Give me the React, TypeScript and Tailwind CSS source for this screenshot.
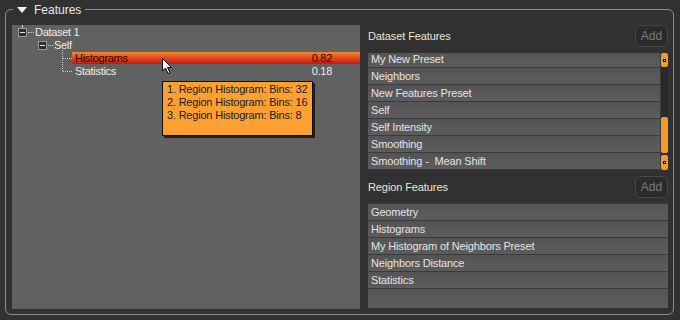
import React from "react";

const font = { fontFamily: '"Liberation Sans", Arial, sans-serif' };

const datasetItems = [
  "My New Preset",
  "Neighbors",
  "New Features Preset",
  "Self",
  "Self Intensity",
  "Smoothing",
  "Smoothing -  Mean Shift",
];

const regionItems = [
  "Geometry",
  "Histograms",
  "My Histogram of Neighbors Preset",
  "Neighbors Distance",
  "Statistics",
];

function Box() {
  return (
    <span className="flex h-[9px] w-[9px] items-center justify-center border border-[#9a9a9a] bg-[#2e2e2e]">
      <span className="h-[1px] w-[5px] bg-[#e0e0e0]" />
    </span>
  );
}

function AddButton() {
  return (
    <button className="h-[22px] w-[33px] rounded-[5px] border border-[#474747] bg-[#2b2b2b] text-[12px] text-[#7a7a7a]">
      Add
    </button>
  );
}

function Row({ label }: { label: string }) {
  return (
    <div className="mb-[1px] flex h-[16px] items-center whitespace-pre bg-gradient-to-b from-[#545454] to-[#5c5c5c] pl-[3px] text-[11px] tracking-[-0.15px] text-[#e4e4e4]">
      {label}
    </div>
  );
}

export default function App() {
  return (
    <div className="h-[320px] w-[680px] bg-[#313131] pl-[5px] pt-[9px]" style={font}>
      {/* Features group */}
      <div className="relative h-[306px] w-[669px] rounded-[6px] border border-[#8c8c8c] pb-[5px] pl-[6px] pr-[4px] pt-[15px]">
        <div className="absolute left-[7px] top-[-9px] flex items-center gap-[7px] bg-[#313131] px-[4px]">
          <svg width="10" height="7" viewBox="0 0 10 7">
            <path d="M0 0 L10 0 L5 6 Z" fill="#f2f2f2" />
          </svg>
          <span className="text-[12px] text-[#e8e8e8]">Features</span>
        </div>

        <div className="flex h-full">
          {/* tree */}
          <div className="relative h-full w-[348px] bg-[#616161] pt-[1px] text-[11px] tracking-[-0.3px] text-[#ececec]">
            <div className="absolute left-[10px] top-0 h-[2px] border-l border-dotted border-[#cfcfcf]" />
            <div className="flex h-[13px] items-center pl-[6px]">
              <Box />
              <span className="ml-[1px] w-[6px] border-t border-dotted border-[#cfcfcf]" />
              <span className="ml-[1px]">Dataset 1</span>
            </div>
            <div className="flex h-[13px] items-center pl-[26px]">
              <Box />
              <span className="ml-[1px] w-[5px] border-t border-dotted border-[#cfcfcf]" />
              <span className="ml-[1px]">Self</span>
            </div>
            <div className="relative">
              <div className="absolute left-[50px] top-[-2px] h-[21px] border-l border-dotted border-[#cfcfcf]" />
              <div className="flex h-[12px] items-center">
                <span className="ml-[51px] w-[9px] border-t border-dotted border-[#cfcfcf]" />
                <div className="flex h-[12px] flex-1 items-center justify-between bg-gradient-to-b from-[#f08a2c] via-[#e2461e] to-[#c21616] pl-[3px] pr-[28px] text-[#2a0800]">
                  <span>Histograms</span>
                  <span>0.82</span>
                </div>
              </div>
              <div className="flex h-[14px] items-center">
                <span className="ml-[51px] w-[9px] border-t border-dotted border-[#cfcfcf]" />
                <div className="flex flex-1 items-center justify-between pl-[3px] pr-[28px]">
                  <span>Statistics</span>
                  <span>0.18</span>
                </div>
              </div>
            </div>

            {/* tooltip */}
            <div className="absolute left-[150px] top-[56px] h-[55px] w-[151px] whitespace-nowrap border border-[#101010] bg-[#fca032] pl-[4px] pt-[1px] text-[11px] leading-[13px] tracking-[-0.2px] text-[#1a1a1a] shadow-[2px_2px_0_#1e1e1e]">
              <div>1. Region Histogram: Bins: 32</div>
              <div>2. Region Histogram: Bins: 16</div>
              <div>3. Region Histogram: Bins: 8</div>
            </div>

            {/* cursor */}
            <svg className="absolute left-[150px] top-[33px]" width="12" height="17" viewBox="0 0 12 17">
              <path d="M0.5 0.5 L0.5 13 L3.5 10 L6 15.5 L8 14.5 L5.5 9.5 L9.5 9.5 Z" fill="#ffffff" stroke="#000000" strokeWidth="1" />
            </svg>
          </div>

          {/* right column */}
          <div className="flex w-[308px] flex-col pl-[8px]">
            <div className="flex h-[22px] items-center justify-between">
              <span className="text-[11px] tracking-[-0.1px] text-[#ece6d2]">Dataset Features</span>
              <AddButton />
            </div>
            <div className="mt-[6px] flex h-[117px] bg-[#3a3a3a]">
              <div className="h-full flex-1 overflow-hidden">
                <div className="-mt-[2px]">
                  {datasetItems.map((t) => (
                    <Row key={t} label={t} />
                  ))}
                </div>
              </div>
              <div className="ml-[1px] flex w-[7px] flex-col bg-[#2a2a2a]">
                <div className="flex h-[14px] items-center justify-center rounded-[2px] bg-[#f39a2a]">
                  <span className="h-[3px] w-[3px] border border-black bg-white" />
                </div>
                <div className="h-[50px]" />
                <div className="h-[36px] rounded-[2px] bg-[#f39a2a]" />
                <div className="flex-1" />
                <div className="flex h-[15px] items-center justify-center rounded-[2px] bg-[#f39a2a]">
                  <span className="h-[3px] w-[3px] border border-black bg-white" />
                </div>
              </div>
            </div>

            <div className="mt-[6px] flex h-[22px] items-center justify-between">
              <span className="text-[11px] tracking-[-0.1px] text-[#ece6d2]">Region Features</span>
              <AddButton />
            </div>
            <div className="mt-[5px] flex h-[105px] flex-col bg-[#3a3a3a] pt-[1px]">
              {regionItems.map((t) => (
                <Row key={t} label={t} />
              ))}
              <div className="flex-1 bg-gradient-to-b from-[#545454] to-[#5c5c5c]" />
            </div>
          </div>
        </div>
      </div>
    </div>
  );
}
